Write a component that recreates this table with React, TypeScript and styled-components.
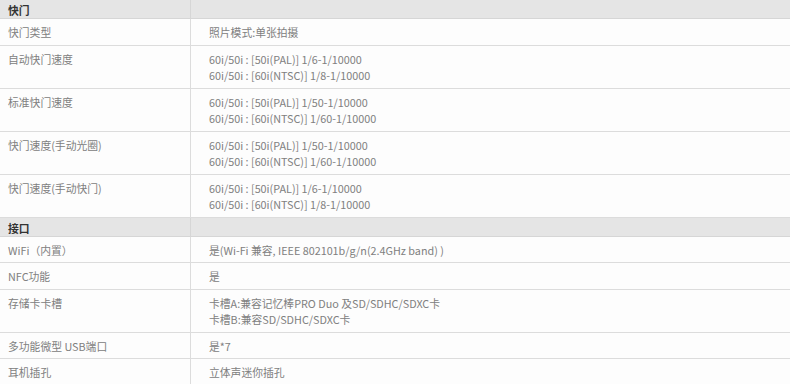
import React from 'react';
import styled, { createGlobalStyle } from 'styled-components';

type Spec = { label: string; values: string[] };
type Section = { title: string; rows: Spec[] };

const sections: Section[] = [
  {
    title: '快门',
    rows: [
      { label: '快门类型', values: ['照片模式:单张拍摄'] },
      {
        label: '自动快门速度',
        values: ['60i/50i : [50i(PAL)] 1/6-1/10000', '60i/50i : [60i(NTSC)] 1/8-1/10000'],
      },
      {
        label: '标准快门速度',
        values: ['60i/50i : [50i(PAL)] 1/50-1/10000', '60i/50i : [60i(NTSC)] 1/60-1/10000'],
      },
      {
        label: '快门速度(手动光圈)',
        values: ['60i/50i : [50i(PAL)] 1/50-1/10000', '60i/50i : [60i(NTSC)] 1/60-1/10000'],
      },
      {
        label: '快门速度(手动快门)',
        values: ['60i/50i : [50i(PAL)] 1/6-1/10000', '60i/50i : [60i(NTSC)] 1/8-1/10000'],
      },
    ],
  },
  {
    title: '接口',
    rows: [
      { label: 'WiFi（内置）', values: ['是(Wi-Fi 兼容, IEEE 802101b/g/n(2.4GHz band) )'] },
      { label: 'NFC功能', values: ['是'] },
      {
        label: '存储卡卡槽',
        values: ['卡槽A:兼容记忆棒PRO Duo 及SD/SDHC/SDXC卡', '卡槽B:兼容SD/SDHC/SDXC卡'],
      },
      { label: '多功能微型 USB端口', values: ['是*7'] },
      { label: '耳机插孔', values: ['立体声迷你插孔'] },
    ],
  },
];

const GlobalStyle = createGlobalStyle`
  body {
    margin: 0;
    background: #fff;
    font-family: "Noto Sans CJK SC", "Noto Sans", sans-serif;
  }
`;

const App: React.FC = () => (
  <>
    <GlobalStyle />
    <Table>
      {sections.map((section) => (
        <React.Fragment key={section.title}>
          <HeaderRow>
            <HeaderCell>{section.title}</HeaderCell>
            <HeaderCell />
          </HeaderRow>
          {section.rows.map((row) => (
            <Row key={row.label}>
              <LabelCell>{row.label}</LabelCell>
              <ValueCell>
                {row.values.map((v) => (
                  <div key={v}>{v}</div>
                ))}
              </ValueCell>
            </Row>
          ))}
        </React.Fragment>
      ))}
    </Table>
  </>
);

export default App;

const Table = styled.div`
  width: 790px;
  display: flex;
  flex-direction: column;
  font-size: 10.8px;
  line-height: 16.5px;
`;

const HeaderRow = styled.div`
  display: grid;
  grid-template-columns: 191px 1fr;
  background: #e5e5e5;
  border-bottom: 1px solid #d6d6d6;
`;

const HeaderCell = styled.div`
  padding: 2px 8px 0;
  height: 16px;
  line-height: 16px;
  font-weight: bold;
  color: #333;

  &:first-child {
    border-right: 1px solid #d6d6d6;
  }
`;

const Row = styled.div`
  display: grid;
  grid-template-columns: 191px 1fr;
  background: #fdfdfd;
  border-bottom: 1px solid #dcdcdc;
`;

const LabelCell = styled.div`
  padding: 5px 8px 4px;
  color: #808080;
  border-right: 1px solid #dcdcdc;
`;

const ValueCell = styled.div`
  padding: 5px 18px 4px;
  color: #808080;
`;
